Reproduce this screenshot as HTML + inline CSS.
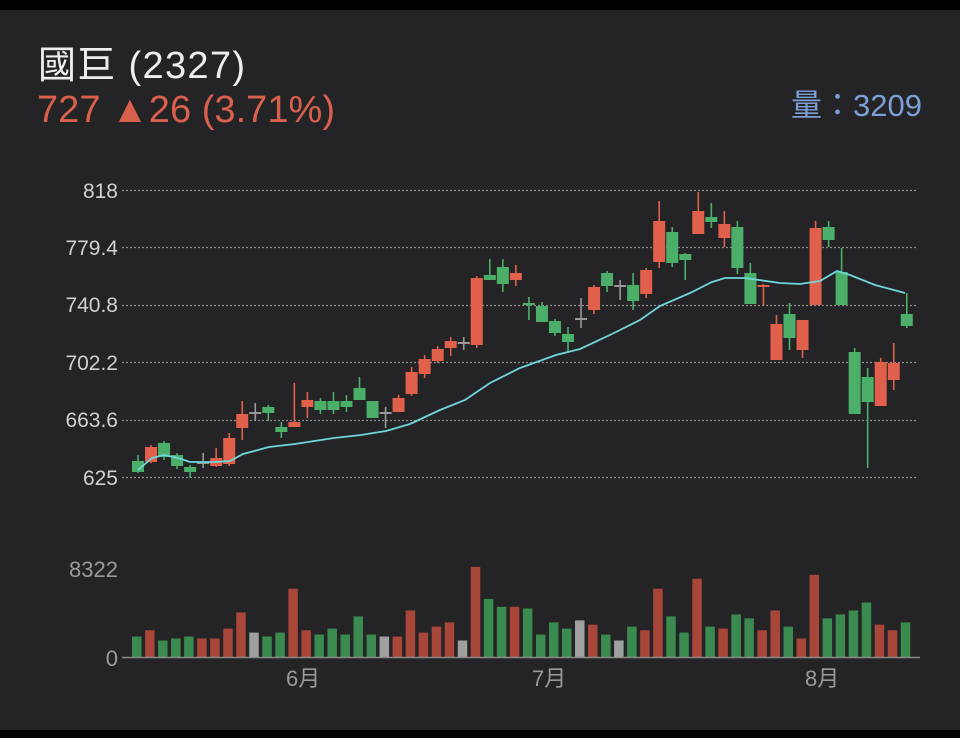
<!DOCTYPE html>
<html><head><meta charset="utf-8"><style>
html,body{margin:0;padding:0;background:#000;}
#w{position:relative;width:960px;height:738px;overflow:hidden;background:#000;}
#bg{position:absolute;left:0;top:10px;width:960px;height:720px;background:#242426;}
svg{position:absolute;left:0;top:0;}
.t{font-family:"Liberation Sans","Noto Sans CJK TC",sans-serif;}
</style></head><body><div id="w"><div id="bg"></div>
<svg id="s" width="960" height="738" xmlns="http://www.w3.org/2000/svg">
<text class="t" x="38" y="78" font-size="38" fill="#eeeeee" textLength="207">國巨 (2327)</text>
<text class="t" x="37" y="122" font-size="38" fill="#d9604c" textLength="298">727 ▲26 (3.71%)</text>
<text class="t" x="922" y="116" font-size="31" fill="#7b9fd6" text-anchor="end">量：3209</text>
<g class="t" font-size="21" fill="#d0d0d0" text-anchor="end">
<text x="118" y="198">818</text><text x="118" y="255">779.4</text><text x="118" y="312">740.8</text>
<text x="118" y="370">702.2</text><text x="118" y="427">663.6</text><text x="118" y="485">625</text>
</g>
<g stroke="#8a8a8a" stroke-width="1.3" stroke-dasharray="2,2">
<line x1="122" y1="190.5" x2="918" y2="190.5"/><line x1="122" y1="247.5" x2="918" y2="247.5"/>
<line x1="122" y1="305.5" x2="918" y2="305.5"/><line x1="122" y1="362.5" x2="918" y2="362.5"/>
<line x1="122" y1="420.5" x2="918" y2="420.5"/><line x1="122" y1="477.5" x2="918" y2="477.5"/>
</g>
<g class="t" font-size="22" fill="#9a9a9a">
<text x="118" y="577" text-anchor="end">8322</text><text x="118" y="666" text-anchor="end">0</text>
<text x="286" y="686">6月</text><text x="532" y="686">7月</text><text x="805" y="686">8月</text>
</g>
<g id="c"></g><g id="v"></g>
<line x1="122" y1="657.5" x2="920" y2="657.5" stroke="#8a8a8a" stroke-width="1.5"/>
<polyline fill="none" stroke="#6fd6dc" stroke-width="1.8" points="138,470 152,458 164,455 178,458 190,462 216,462 230,461 243,454 269,447 295,444 334,438 361,435 386,431 410,424 440,410 465,400 490,383 520,368 556,355 580,349 610,335 640,320 660,306 690,293 712,282 725,278 745,278 780,283 800,284 820,281 837,271 850,275 875,285 905,293"/>
</svg>
<script>
(function(){
var C=[["g",461,472,455,473],["r",447,462,445,463],["g",443,457,441,460],["g",455,466,453,469],["g",467,472,465,478],["x",463,463,453,468],["r",458,466,448,467],["r",438,464,433,466],["r",414,428,401,440],["x",413,413,403,421],["g",407,413,405,421],["g",427,432,422,438],["r",422,427,383,427],["r",400,407,392,418],["g",401,410,398,414],["g",401,410,392,414],["g",401,407,395,412],["g",388,400,377,400],["g",401,418,401,418],["x",413,413,407,428],["r",398,412,395,412],["r",372,394,367,396],["r",359,374,355,378],["r",349,361,346,363],["r",341,348,337,356],["x",343,343,337,350],["r",278,345,276,348],["g",275,280,259,280],["g",267,284,259,292],["r",273,280,265,286],["g",303,305,297,320],["g",306,322,302,322],["g",321,333,319,336],["g",334,342,327,352],["x",319,319,298,328],["r",287,310,285,314],["g",273,286,271,292],["x",286,286,280,300],["g",285,301,273,310],["r",270,294,268,298],["r",221,262,201,268],["g",232,263,227,267],["g",254,260,253,280],["r",211,234,192,234],["g",217,222,203,228],["r",224,238,211,247],["g",227,268,221,274],["g",273,304,263,304],["r",285,287,284,305],["r",324,360,315,360],["g",314,338,303,350],["r",320,350,320,358],["r",228,305,221,305],["g",227,240,221,247],["g",272,305,248,305],["g",352,414,348,414],["g",377,402,368,468],["r",362,406,358,406],["r",363,380,343,390],["g",314,326,293,328]];
var V=["g260","r241","g272","g266","g260","r266","r266","r236","r187","x248","g260","g248","r115","r241","g254","g236","g254","g199","g254","x260","r260","r181","r248","r230","r217","x272","r49","g146","g170","r170","g175","g254","g217","g236","x211","r224","g254","x272","g230","r241","r115","g199","g248","r85","g230","r236","g193","g205","r241","r181","g230","r266","r73","g205","g193","g181","g157","r224","r241","g217"];
var cc={g:"#4caf69",r:"#e0604b",x:"#999"},vc={g:"#3b8a4f",r:"#a8463a",x:"#a0a0a0"};
var h="";
for(var i=0;i<C.length;i++){var d=C[i],x=138+i*13.03,col=cc[d[0]];
h+='<line x1="'+x+'" y1="'+d[3]+'" x2="'+x+'" y2="'+d[4]+'" stroke="'+col+'" stroke-width="1.6"/>';
var bh=Math.max(d[2]-d[1],2);h+='<rect x="'+(x-6)+'" y="'+(d[2]-d[1]<2?d[1]-1:d[1])+'" width="12" height="'+bh+'" fill="'+col+'"/>';}
document.getElementById("c").innerHTML=h;h="";
for(var i=0;i<V.length;i++){var t=V[i][0],yy=+V[i].slice(1),x=132+i*13.03,tp=657-(322-yy)/3.03;
h+='<rect x="'+x+'" y="'+tp+'" width="9.5" height="'+(657-tp)+'" fill="'+vc[t]+'"/>';}
document.getElementById("v").innerHTML=h;
})();
</script>
</div></body></html>
